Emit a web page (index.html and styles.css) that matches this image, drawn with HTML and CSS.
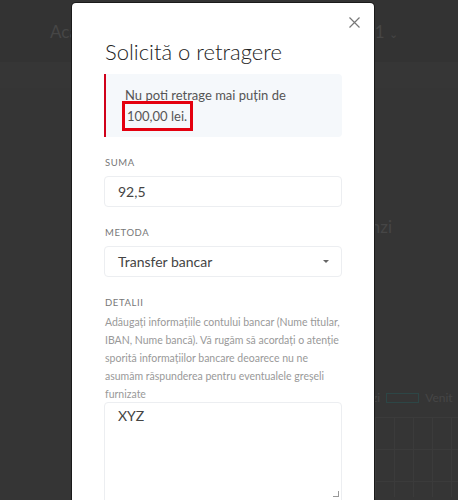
FILE: index.html
```html
<!DOCTYPE html>
<html lang="ro">
<head>
    <meta charset="UTF-8">
    <meta name="viewport" content="width=device-width, initial-scale=1.0">
    <title>Solicită o retragere</title>
    <link rel="stylesheet" href="styles.css">
</head>
<body>
    <div class="page">
        <div class="topbar">
            <span class="nav-left">Acasă</span>
            <span class="nav-right">1 <span class="chev">&#8964;</span></span>
        </div>
        <div class="band"></div>
        <div class="content">
            <div class="title-bg">Vânzi</div>
            <div class="legend">
                <span>Vânzi</span>
                <span class="legend-box"></span>
                <span>Venit</span>
            </div>
            <div class="grid"></div>
        </div>
    </div>

    <div class="overlay">
        <div class="modal">
            <svg class="close" width="11" height="11" viewBox="0 0 11 11">
                <path d="M0.5 0.5 L10.5 10.5 M10.5 0.5 L0.5 10.5" stroke="#777" stroke-width="1.2" fill="none"/>
            </svg>
            <h1 class="modal-title">Solicită o retragere</h1>
            <div class="alert">
                Nu poti retrage mai puțin de <span class="mark">100,00 lei.</span>
            </div>

            <label class="lbl">SUMA</label>
            <div class="field">92,5</div>

            <label class="lbl">METODA</label>
            <div class="field select">
                <span>Transfer bancar</span>
                <span class="caret"></span>
            </div>

            <label class="lbl">DETALII</label>
            <p class="help">Adăugați informațiile contului bancar (Nume titular, IBAN, Nume bancă). Vă rugăm să acordați o atenție sporită informațiilor bancare deoarece nu ne asumăm răspunderea pentru eventualele greșeli furnizate</p>
            <div class="field area">XYZ<span class="grip"></span></div>
        </div>
    </div>
</body>
</html>
```
FILE: styles.css
```css
*{margin:0;padding:0;box-sizing:border-box;}
body{
    background:#353535;
    font-family:"Lato","Noto Sans",sans-serif;
    width:458px;height:500px;overflow:hidden;
    position:relative;
}
.page{color:#464646;}
.topbar{
    height:62px;background:#333;
    display:flex;justify-content:space-between;align-items:center;
    padding:0 0 0 50px;font-size:17px;
}
.nav-right{padding-right:60px;}
.chev{font-size:11px;}
.band{height:26px;background:#363636;}
.content{padding:128px 0 0 0;}
.title-bg{font-size:17px;padding-left:352px;height:60px;}
.legend{
    display:flex;align-items:center;gap:6px;
    padding:114px 0 0 352px;font-size:12px;
}
.legend-box{width:33px;height:10px;border:1px solid #2d4646;}
.grid{
    margin:12px 0 0 375px;height:80px;
    background-image:linear-gradient(#3b3b3b 1px,transparent 1px),linear-gradient(90deg,#3b3b3b 1px,transparent 1px);
    background-size:19px 32px;
}

.overlay{position:absolute;left:0;top:0;width:458px;height:500px;}
.modal{
    position:absolute;left:72px;top:3px;width:302px;height:520px;
    background:#fff;border-radius:4px;
    box-shadow:0 0 0 1px #1a1a1a;
    padding:30px 32px 0 32px;
}
.close{position:absolute;right:14px;top:14px;}
.modal-title{
    font-weight:300;font-size:22px;color:#222;
    margin:4px 0 0 1px;height:37px;line-height:30px;
}
.alert{
    background:#f5f8fb;border-left:2px solid #d0021b;
    border-radius:0 4px 4px 0;
    padding:11px 20px 10px 19px;
    font-size:13px;line-height:21px;color:#555;
    height:63px;
}
.mark{outline:3px solid #e4000f;padding:4px 3px 4px 2px;}
.lbl{
    display:block;font-size:9.5px;letter-spacing:.6px;color:#777;
    margin:19px 0 7px 1px;line-height:13px;
}
.help{font-size:10.5px;line-height:18px;color:#999;margin:-3px 0 -1px 1px;}
.field{
    border:1px solid #eceef1;border-radius:4px;
    height:31px;padding:0 13px;
    display:flex;align-items:center;
    font-size:14px;color:#444;
}
.select{justify-content:space-between;}
.caret{
    width:0;height:0;border-left:3px solid transparent;border-right:3px solid transparent;
    border-top:3px solid #666;margin-right:-1px;
}
.area{height:110px;align-items:flex-start;padding-top:4px;position:relative;}
.grip{
    position:absolute;right:2px;bottom:14px;width:6px;height:6px;
    border-right:1px solid #999;border-bottom:1px solid #999;
}
```
